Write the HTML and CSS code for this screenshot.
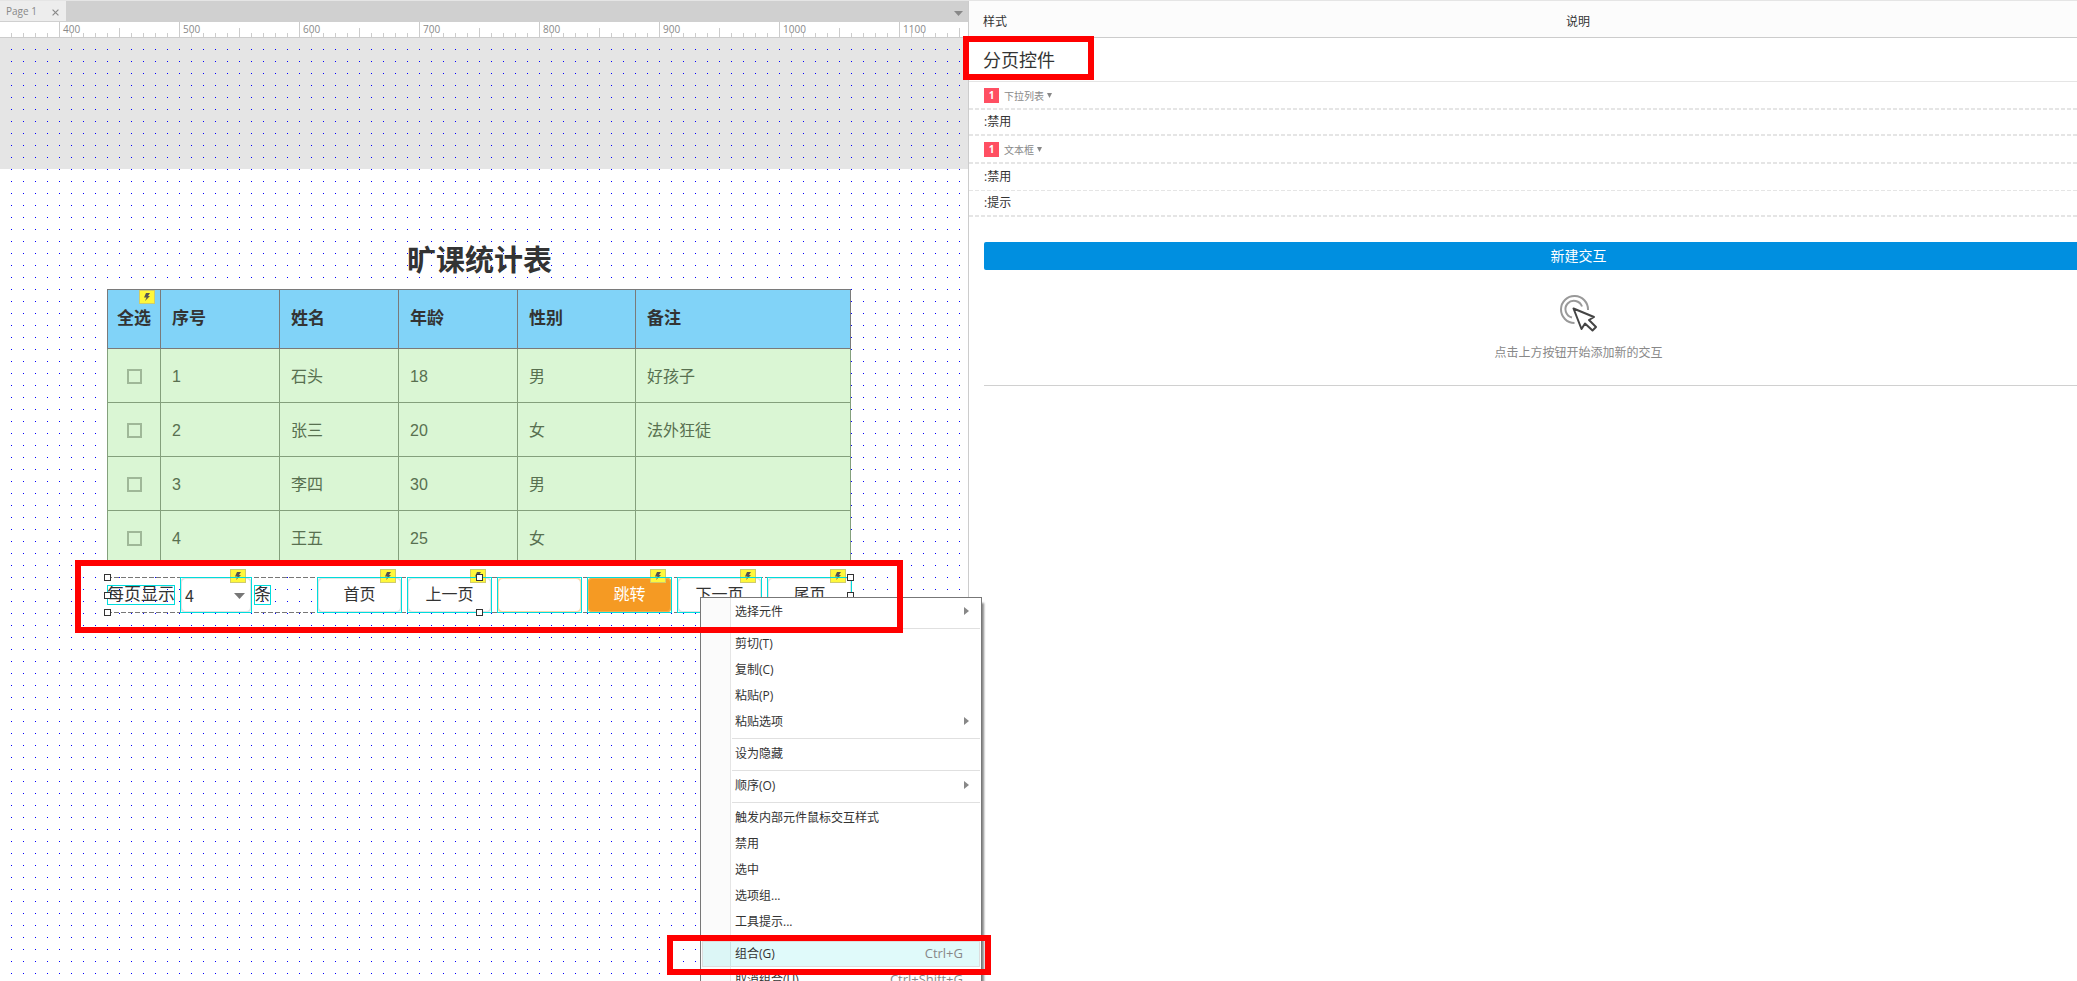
FILE: index.html
```html
<!DOCTYPE html>
<html lang="zh-CN">
<head>
<meta charset="utf-8">
<title>Page 1</title>
<link rel="stylesheet" href="styles.css">
</head>
<body>
<svg class="defs" aria-hidden="true">
  <symbol id="bolt" viewBox="0 0 8 10"><path d="M3 1H7L5 4H7L2 9L3.500 5.500H1Z"/></symbol>
</svg>
<div class="app">
  <main class="editor">
    <div class="tabbar">
      <div class="tab"><span>Page 1</span><button class="tab-close" aria-label="关闭"><svg width="7" height="7" viewBox="0 0 6 6"><path d="M0.5 0.5L5.5 5.5M5.5 0.5L0.5 5.5"/></svg></button></div>
      <button class="tab-menu" aria-label="页面列表"><svg width="9" height="5" viewBox="0 0 9 5"><path d="M0 0H9L4.5 5Z"/></svg></button>
    </div>
    <div class="ruler">
      <span>400</span><span>500</span><span>600</span><span>700</span><span>800</span><span>900</span><span>1000</span><span>1100</span>
    </div>
    <div class="canvas">
      <div class="offpage"></div>
      <h1 class="title">旷课统计表</h1>
      <div class="sheet">
        <table>
          <colgroup><col class="c-check"><col class="c-mid"><col class="c-mid"><col class="c-mid"><col class="c-slim"><col></colgroup>
          <thead>
            <tr><th class="pick">全选</th><th>序号</th><th>姓名</th><th>年龄</th><th>性别</th><th>备注</th></tr>
          </thead>
          <tbody>
            <tr><td class="pick"><input type="checkbox" aria-label="选择 1"></td><td>1</td><td>石头</td><td>18</td><td>男</td><td>好孩子</td></tr>
            <tr><td class="pick"><input type="checkbox" aria-label="选择 2"></td><td>2</td><td>张三</td><td>20</td><td>女</td><td>法外狂徒</td></tr>
            <tr><td class="pick"><input type="checkbox" aria-label="选择 3"></td><td>3</td><td>李四</td><td>30</td><td>男</td><td></td></tr>
            <tr><td class="pick"><input type="checkbox" aria-label="选择 4"></td><td>4</td><td>王五</td><td>25</td><td>女</td><td></td></tr>
          </tbody>
        </table>
        <span class="bolt bolt-sheet"><svg width="8" height="10"><use href="#bolt"/></svg></span>
      </div>
      <div class="pager">
        <label class="widget text" for="size">每页显示</label>
        <div class="widget drop"><select id="size"><option>4</option></select><svg class="caret" width="11" height="6" viewBox="0 0 11 6"><path d="M0 0H11L5.5 6Z"/></svg><span class="bolt"><svg width="8" height="10"><use href="#bolt"/></svg></span></div>
        <span class="widget text unit">条</span>
        <div class="widget cell first"><button>首页</button><span class="bolt"><svg width="8" height="10"><use href="#bolt"/></svg></span></div>
        <div class="widget cell"><button>上一页</button><span class="bolt"><svg width="8" height="10"><use href="#bolt"/></svg></span></div>
        <div class="widget cell"><input type="text" aria-label="页码"></div>
        <div class="widget cell"><button class="jump">跳转</button><span class="bolt"><svg width="8" height="10"><use href="#bolt"/></svg></span></div>
        <div class="widget cell"><button>下一页</button><span class="bolt"><svg width="8" height="10"><use href="#bolt"/></svg></span></div>
        <div class="widget cell"><button>尾页</button><span class="bolt"><svg width="8" height="10"><use href="#bolt"/></svg></span></div>
        <i class="handle left top"></i><i class="handle center top"></i><i class="handle right top"></i>
        <i class="handle left middle"></i><i class="handle right middle"></i>
        <i class="handle left bottom"></i><i class="handle center bottom"></i><i class="handle right bottom"></i>
      </div>
    </div>
  </main>

  <aside class="inspector">
    <div class="inner">
      <header class="heads"><span>样式</span><span>说明</span></header>
      <h2 class="name">分页控件</h2>
      <button class="group"><span class="num">1</span>下拉列表<svg width="5" height="5" viewBox="0 0 5 5"><path d="M0 0H5L2.5 5Z"/></svg></button>
      <div class="state">:禁用</div>
      <button class="group"><span class="num">1</span>文本框<svg width="5" height="5" viewBox="0 0 5 5"><path d="M0 0H5L2.5 5Z"/></svg></button>
      <div class="state thin">:禁用</div>
      <div class="state">:提示</div>
      <section class="events">
        <button class="create">新建交互</button>
        <svg class="click" width="38" height="38" viewBox="0 0 38 38" stroke-width="2">
          <path d="M28 15A13.5 13.5 0 1 0 14.500 28" stroke="#999"/>
          <path d="M22 11.500A8.500 8.500 0 1 0 12 22.500" stroke="#999"/>
          <path d="M13.500 13.500L21.500 34L25 28.500L32.500 35.500L36 32L29 25L34 22Z" stroke="#444" stroke-linejoin="round"/>
        </svg>
        <p>点击上方按钮开始添加新的交互</p>
      </section>
    </div>
  </aside>

  <menu class="context">
    <li><button>选择元件<svg width="5" height="8" viewBox="0 0 5 8"><path d="M0 0L5 4L0 8Z"/></svg></button></li>
    <li class="rule"></li>
    <li><button>剪切(T)</button></li>
    <li><button>复制(C)</button></li>
    <li><button>粘贴(P)</button></li>
    <li><button>粘贴选项<svg width="5" height="8" viewBox="0 0 5 8"><path d="M0 0L5 4L0 8Z"/></svg></button></li>
    <li class="rule"></li>
    <li><button>设为隐藏</button></li>
    <li class="rule"></li>
    <li><button>顺序(O)<svg width="5" height="8" viewBox="0 0 5 8"><path d="M0 0L5 4L0 8Z"/></svg></button></li>
    <li class="rule"></li>
    <li><button>触发内部元件鼠标交互样式</button></li>
    <li><button>禁用</button></li>
    <li><button>选中</button></li>
    <li><button>选项组...</button></li>
    <li><button>工具提示...</button></li>
    <li class="rule"></li>
    <li><button class="active">组合(G)<kbd>Ctrl+G</kbd></button></li>
    <li><button>取消组合(U)<kbd>Ctrl+Shift+G</kbd></button></li>
  </menu>

  <div class="mark mark-pager"></div>
  <div class="mark mark-name"></div>
  <div class="mark mark-group"></div>
</div>
</body>
</html>
```
FILE: styles.css
```css
* { box-sizing: border-box; }
body { margin: 0; font-family: "Open Sans", "Noto Sans CJK SC", sans-serif; font-size: 12px; color: #333; background: #fff; }
button, input, select { font: inherit; color: inherit; padding: 0; margin: 0; border: 0; background: none; border-radius: 0; }
svg { display: block; fill: currentColor; }
.defs { position: absolute; width: 0; height: 0; }

.app { position: relative; display: flex; height: 100vh; overflow: hidden; border-top: 1px solid #e5e5e5; }

/* editor */
.editor { flex: 0 0 969px; min-width: 0; display: flex; flex-direction: column; border-right: 1px solid #ccc; }
.tabbar { display: flex; justify-content: space-between; height: 21px; background: #d0d0d0; color: #888; font-size: 10px; }
.tab { display: flex; align-items: center; gap: 15px; height: 20px; width: 66px; padding-left: 6px; background: #ededed; line-height: 20px; }
.tab-close svg { stroke: #888; fill: none; margin-top: 3px; }
.tab-menu { padding: 3px 5px 0 0; color: #888; }
.ruler {
  display: flex; flex: none; height: 16px; padding-left: 59px; overflow: hidden;
  border-bottom: 1px solid #ccc; color: #888; font-size: 10px; line-height: 14px;
  background:
    repeating-linear-gradient(90deg, #ccc 0 1px, transparent 1px 12px) 11px 100% / 100% 4px no-repeat,
    repeating-linear-gradient(90deg, #ccc 0 1px, transparent 1px 60px) 59px 100% / 100% 9px no-repeat,
    #fff;
}
.ruler span { flex: 0 0 120px; padding-left: 3px; border-left: 1px solid #ccc; }
.canvas { position: relative; flex: 1; overflow: hidden; background: #fff; }
.canvas::before {
  content: ""; position: absolute; inset: 0; z-index: 1;
  background: conic-gradient(from 90deg at 11px 11px, #00f 25%, transparent 0) 0 0 / 12px 12px;
}
.offpage { height: 131px; background: #e5e5e5; }
.title { position: absolute; z-index: 2; left: 107px; top: 200px; width: 745px; margin: 0; text-align: center; font: bold 29px/40px "Noto Sans CJK SC", sans-serif; }
.sheet { position: absolute; z-index: 2; left: 107px; top: 251px; width: 744px; }
.sheet table { width: 100%; table-layout: fixed; border-collapse: collapse; font: 16px/24px "Liberation Sans", "Noto Sans CJK SC", sans-serif; }
.c-check { width: 53px; }
.c-mid { width: 119px; }
.c-slim { width: 118px; }
.sheet th { height: 59px; padding: 0 0 0 11px; text-align: left; font-size: 17px; background: #81d3f8; border: 1px solid #7a7a7a; }
.sheet td { height: 54px; padding: 2px 0 0 11px; color: #587050; background: #daf6d4; border: 1px solid #84a07c; }
.sheet .pick { padding-left: 0; text-align: center; }
.sheet input { display: block; appearance: none; width: 15px; height: 15px; margin: 0 auto; border: 2px solid #9fb898; }

.bolt { position: absolute; right: 6px; top: -8px; display: grid; place-items: center; width: 16px; height: 14px; background: #fff83a; border: 1px solid #d0cc6a; color: #555; }
.bolt-sheet { left: 32px; top: 1px; }

/* selected pager group */
.pager { position: absolute; z-index: 2; left: 107px; top: 539px; width: 745px; height: 36px; display: flex; align-items: center; gap: 5px; font: 16px/20px "Noto Sans CJK SC", sans-serif; }
.pager::before, .pager::after { content: ""; position: absolute; left: 0; right: 0; height: 1px; background: repeating-linear-gradient(90deg, #777 0 5px, transparent 5px 7px); }
.pager::before { top: 0; }
.pager::after { bottom: 0; }
.widget { position: relative; z-index: 1; }
.widget::after { content: ""; position: absolute; inset: 0; border: 1px solid #00dcdc; pointer-events: none; }
.text { height: 20px; font-size: 17px; line-height: 16px; }
.unit { margin-left: -3px; }
.drop { width: 72px; height: 36px; }
.drop select { appearance: none; width: 100%; height: 100%; padding-left: 3px; background: #fff; border: 2px solid #e2e2e2; border-radius: 6px; }
.caret { position: absolute; right: 7px; top: 16px; color: #777; }
.cell { width: 85px; height: 36px; }
.first { margin-left: auto; }
.cell button, .cell input { display: block; width: 100%; height: 100%; padding-bottom: 4px; background: #fff; border: 2px solid #e2e2e2; border-radius: 6px; }
.cell input { border-color: #f9d7a8; }
.cell .jump { background: #f59a23; border-color: #f7ab49; color: #fff; }
.handle { position: absolute; z-index: 2; width: 7px; height: 7px; background: #fff; border: 1px solid #333; }
.left { left: -3px; }
.center { left: calc(50% - 4px); }
.right { right: -2px; }
.top { top: -3px; }
.middle { top: calc(50% - 3px); }
.bottom { bottom: -3px; }

/* inspector */
.inspector { flex: 1; min-width: 0; overflow: hidden; }
.inner { width: calc(100% + 110px); }
.heads { display: grid; grid-template-columns: 1fr auto 1fr; height: 37px; padding: 5px 14px 0; line-height: 32px; background: #fcfcfc; border-bottom: 1px solid #ccc; }
.name { margin: 0; height: 44px; padding-left: 14px; border-bottom: 1px solid #e5e5e5; font: 18px/42px "Noto Sans CJK SC", sans-serif; }
.group, .state { display: flex; align-items: center; width: 100%; padding: 0 0 4px 15px; background: repeating-linear-gradient(90deg, #e5e5e5 0 4px, transparent 4px 6px) 0 100% / 100% 2px no-repeat; }
.group { height: 28px; padding-bottom: 1px; font-size: 10px; color: #888; }
.group svg { margin-left: 3px; }
.num { width: 15px; height: 15px; margin-right: 5px; background: #ff4f62; color: #fff; font-weight: bold; line-height: 15px; text-align: center; }
.state { height: 26px; }
.thin { height: 27px; background-size: 100% 1px; }
.events { display: flex; flex-direction: column; align-items: center; margin: 25px 14px 0 15px; height: 144px; border-bottom: 1px solid #d0d0d0; }
.create { flex: none; width: 100%; height: 28px; background: #008fe0; border-radius: 2px; color: #fff; font-size: 14px; line-height: 26px; }
.click { flex: none; margin-top: 25px; fill: none; }
.events p { margin: 10px 0 0; color: #888; line-height: 20px; }

/* context menu */
.context {
  position: absolute; z-index: 5; left: 700px; top: 596px; width: 282px; margin: 0; padding: 1px; list-style: none;
  border: 1px solid #777; box-shadow: 3px 5px 2px -1px #888;
  background: linear-gradient(90deg, #fbfbfb 29px, #e5e5e5 29px 30px, #fff 30px);
}
.context button { display: flex; align-items: center; width: 100%; height: 26px; padding: 0 17px 2px 33px; text-align: left; white-space: nowrap; }
.context svg { margin-left: auto; margin-right: -6px; color: #888; }
.context .active { background: rgba(0, 210, 210, 0.12); outline: 1px solid #ddd; outline-offset: -1px; }
.context kbd { margin-left: auto; font: inherit; font-size: 13px; color: #888; }
.rule { height: 6px; margin-left: 30px; padding-top: 3px; }
.rule::after { content: ""; display: block; height: 1px; background: #e0e0e0; }

/* highlight frames */
.mark { position: absolute; z-index: 6; border: 6px solid #f00; pointer-events: none; }
.mark-pager { left: 75px; top: 559px; width: 828px; height: 73px; }
.mark-name { left: 963px; top: 35px; width: 131px; height: 44px; }
.mark-group { left: 667px; top: 934px; width: 324px; height: 40px; }
```
